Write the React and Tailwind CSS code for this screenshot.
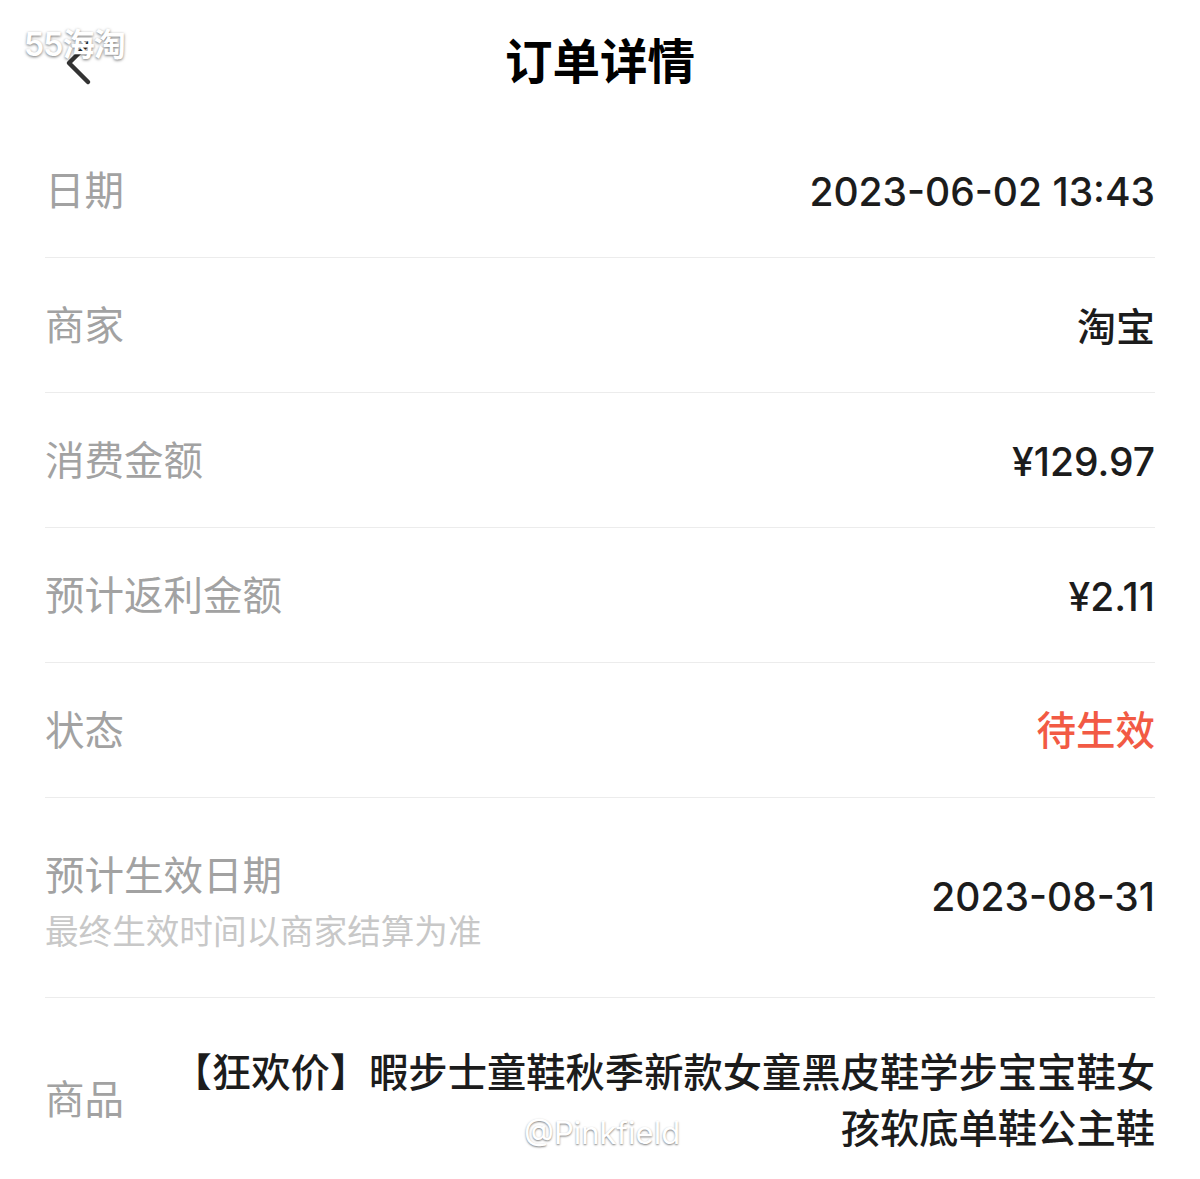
import React from 'react';

const font = { fontFamily: '"Inter", "Noto Sans CJK SC", sans-serif' };

const rows = [
  { label: '日期', value: '2023-06-02 13:43' },
  { label: '商家', value: '淘宝' },
  { label: '消费金额', value: '¥129.97' },
  { label: '预计返利金额', value: '¥2.11' },
  { label: '状态', value: '待生效', red: true },
];

const Row = ({ label, value, red }) => (
  <div className="h-[135px] pt-1 flex items-center justify-between border-b border-[#ececec]">
    <span className="text-[39.5px] text-[#a2a2a2]">{label}</span>
    <span className={red ? 'text-[39.5px] font-medium text-[#f25a44]' : 'text-[39px] font-medium text-[#1c1c1c]'}>{value}</span>
  </div>
);

const App = () => {
  return (
    <div className="relative w-[1200px] h-[1179px] bg-white overflow-hidden" style={font}>
      <div className="relative h-[123px] flex items-center justify-center">
        <svg className="absolute left-[60px] top-[36px]" width="40" height="56" viewBox="0 0 40 56">
          <polyline points="28,8 9,27 28,46" fill="none" stroke="#333" strokeWidth="4.5" strokeLinecap="round" strokeLinejoin="round" />
        </svg>
        <h1 className="text-[47.5px] font-bold text-black leading-none">订单详情</h1>
      </div>

      <div className="px-[45px]">
        {rows.map((r) => (
          <Row key={r.label} {...r} />
        ))}

        <div className="h-[200px] flex items-center justify-between border-b border-[#ececec]">
          <div className="flex flex-col pt-[12px]">
            <span className="text-[39.5px] leading-[50px] text-[#a2a2a2]">预计生效日期</span>
            <span className="text-[33.6px] leading-[50px] mt-[6px] text-[#c8c8c8]">最终生效时间以商家结算为准</span>
          </div>
          <span className="text-[39px] font-medium text-[#1c1c1c]">2023-08-31</span>
        </div>

        <div className="pt-[47px] flex items-center justify-between">
          <span className="text-[39.5px] text-[#a2a2a2]">商品</span>
          <p className="w-[992px] text-right text-[39.3px] leading-[56px] font-medium text-[#1c1c1c]">
            【狂欢价】暇步士童鞋秋季新款女童黑皮鞋学步宝宝鞋女孩软底单鞋公主鞋
          </p>
        </div>
      </div>

      <span className="absolute left-[24px] top-[21px] text-[32px] font-semibold text-white tracking-tight [text-shadow:0_1px_3px_rgba(0,0,0,0.55)]">
        55海淘
      </span>
      <span className="absolute left-[524px] top-[1110px] text-[31px] text-white [text-shadow:0_1px_2px_rgba(0,0,0,0.5)]">
        @Pinkfield
      </span>
    </div>
  );
};

export default App;
